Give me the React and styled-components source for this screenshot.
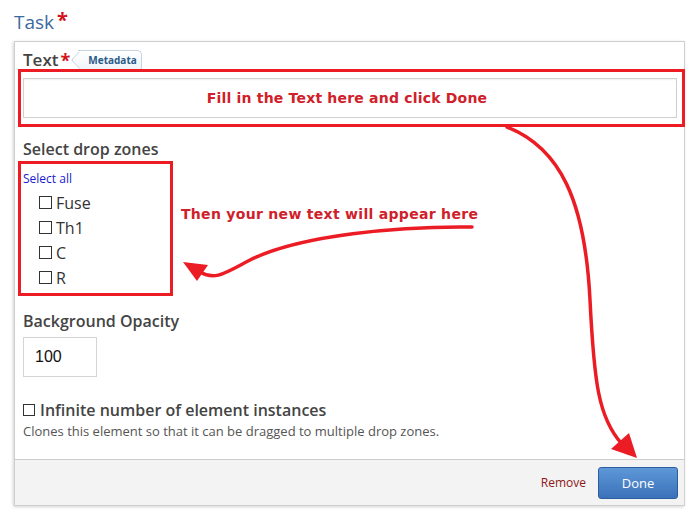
import React from "react";
import styled, { createGlobalStyle } from "styled-components";

const Global = createGlobalStyle`
  html, body { margin: 0; padding: 0; background: #fff; }
  body { font-family: "Open Sans", "Noto Sans", sans-serif; color: #444; }
  * { box-sizing: border-box; }
`;

const Page = styled.div`
  position: relative;
  width: 700px;
  height: 512px;
  padding: 10px 0 0 14px;
  overflow: hidden;
`;

const Title = styled.div`
  font-size: 19px;
  line-height: 24px;
  color: #3c6a9c;
  font-weight: 400;
`;

const Star = styled.span`
  color: #d2141c;
  font-size: ${(p) => p.$size || 20}px;
  font-weight: 700;
  margin-left: ${(p) => p.$ml ?? 3}px;
  vertical-align: top;
  line-height: 1;
`;

const Panel = styled.div`
  width: 671px;
  margin-top: 7px;
  border: 1px solid #cfcfcf;
  box-shadow: -1px 1px 3px rgba(0, 0, 0, 0.18);
  background: #fff;
`;

const Body = styled.div`
  padding: 8px 8px 20px 8px;
  display: flex;
  flex-direction: column;
`;

const LabelRow = styled.div`
  display: flex;
  align-items: flex-start;
  height: 19px;
`;

const Label = styled.div`
  font-size: ${(p) => p.$size || 16}px;
  line-height: 20px;
  font-weight: 600;
  color: #444;
  margin-top: ${(p) => p.$mt || 0}px;
  display: flex;
  align-items: center;
`;

const Tag = styled.span`
  position: relative;
  margin-left: 8px;
  margin-top: 0px;
  height: 20px;
  padding: 0 4px 1px 10px;
  display: inline-flex;
  align-items: center;
  font-size: 10px;
  font-weight: 700;
  color: #2c5a8a;
  background: linear-gradient(#ffffff, #edf2f7);
  border: 1px solid #c9d3de;
  border-left: none;
  border-bottom: none;
  border-radius: 0 5px 0 0;
  &::before {
    content: "";
    position: absolute;
    left: -5px;
    top: 3px;
    width: 11px;
    height: 11px;
    background: linear-gradient(135deg, #ffffff, #f2f5f9);
    border-left: 1px solid #c9d3de;
    border-bottom: 1px solid #c9d3de;
    transform: rotate(45deg);
    border-radius: 0 0 0 3px;
  }
`;

const TagText = styled.span`
  position: relative;
`;

const Highlight = styled.div`
  position: relative;
  border: 3px solid #ec1c24;
  margin-left: -5px;
  width: ${(p) => p.$w}px;
  padding: ${(p) => p.$pad};
  margin-top: ${(p) => p.$mt || 0}px;
  flex-shrink: 0;
  background: #fff;
`;

const TextField = styled.div`
  height: 40px;
  border: 1px solid #d0d0d0;
  box-shadow: inset 0 1px 2px rgba(0, 0, 0, 0.06);
  display: flex;
  align-items: center;
  justify-content: center;
  padding-right: 6px;
`;

const Callout = styled.span`
  font-family: "DejaVu Sans", Verdana, sans-serif;
  font-weight: 700;
  font-size: ${(p) => p.$size || 14}px;
  color: #d0202a;
  letter-spacing: ${(p) => p.$ls || 0}px;
  white-space: nowrap;
`;

const ZoneRow = styled.div`
  display: flex;
  align-items: flex-start;
`;

const SideCallout = styled.div`
  margin-left: 8px;
  padding-top: 43px;
`;

const SelectAll = styled.a`
  display: block;
  font-size: 12px;
  line-height: 16px;
  color: #1a1ad0;
  text-decoration: none;
  margin-bottom: 3px;
`;

const Option = styled.label`
  display: flex;
  align-items: center;
  height: 25px;
  padding-left: 16px;
  font-size: 16px;
  color: #333;
`;

const Box = styled.span`
  width: ${(p) => p.$s || 13}px;
  height: ${(p) => p.$s || 13}px;
  border: 1px solid #333;
  background: #fff;
  margin-right: ${(p) => p.$mr || 4}px;
  flex-shrink: 0;
`;

const NumberField = styled.div`
  margin-top: 6px;
  width: 74px;
  height: 40px;
  border: 1px solid #d4d4d4;
  padding-left: 11px;
  display: flex;
  align-items: center;
  font-family: "Liberation Sans", Arial, sans-serif;
  font-size: 16px;
  color: #111;
`;

const CheckLine = styled.label`
  margin-top: 23px;
  display: flex;
  align-items: center;
  font-size: 16px;
  line-height: 20px;
  font-weight: 600;
  color: #444;
`;

const Description = styled.div`
  margin-top: 3px;
  font-size: 13px;
  line-height: 16px;
  color: #555;
`;

const Footer = styled.div`
  border-top: 1px solid #cccccc;
  background: #f3f3f3;
  height: 46px;
  display: flex;
  align-items: flex-start;
  justify-content: flex-end;
  padding: 7px 6px 0 0;
  gap: 12px;
`;

const Remove = styled.a`
  font-size: 12px;
  line-height: 32px;
  color: #8e1717;
  text-decoration: none;
`;

const Done = styled.button`
  width: 80px;
  height: 32px;
  border: 1px solid #2d5d9e;
  border-radius: 3px;
  background: linear-gradient(#5e98d8, #3b71b9);
  color: #fff;
  font-family: "Open Sans", sans-serif;
  font-size: 13px;
  padding: 0;
`;

const Overlay = styled.svg`
  position: absolute;
  left: 0;
  top: 0;
  pointer-events: none;
`;

export default function App() {
  return (
    <Page>
      <Global />
      <Title>
        Task<Star $size={20}>*</Star>
      </Title>
      <Panel>
        <Body>
          <LabelRow>
            <Label $size={17}>
              Text<Star $size={18} $ml={2}>*</Star>
            </Label>
            <Tag>
              <TagText>Metadata</TagText>
            </Tag>
          </LabelRow>
          <Highlight $w={667} $pad="6px 5px 6px 2px">
            <TextField>
              <Callout $size={14} $ls={0.2}>
                Fill in the Text here and click Done
              </Callout>
            </TextField>
          </Highlight>
          <Label $mt={12}>Select drop zones</Label>
          <ZoneRow>
            <Highlight $w={155} $pad="7px 2px 3px 2px" $mt={2}>
              <SelectAll href="#">Select all</SelectAll>
              {["Fuse", "Th1", "C", "R"].map((o) => (
                <Option key={o}>
                  <Box />
                  {o}
                </Option>
              ))}
            </Highlight>
            <SideCallout>
              <Callout $size={14} $ls={0.3}>
                Then your new text will appear here
              </Callout>
            </SideCallout>
          </ZoneRow>
          <Label $mt={15}>Background Opacity</Label>
          <NumberField>100</NumberField>
          <CheckLine>
            <Box $s={12} $mr={5} />
            Infinite number of element instances
          </CheckLine>
          <Description>
            Clones this element so that it can be dragged to multiple drop zones.
          </Description>
        </Body>
        <Footer>
          <Remove href="#">Remove</Remove>
          <Done>Done</Done>
        </Footer>
      </Panel>
      <Overlay width="700" height="512" viewBox="0 0 700 512">
        <g fill="none" stroke="#ec1c24" strokeWidth="3.5" strokeLinecap="round">
          <path d="M507 127 C 560 148, 585 200, 590 300 C 594 380, 598 418, 622 444" />
          <path d="M472 227 C 400 226, 300 235, 250 260 C 225 273, 215 281, 200 272" />
        </g>
        <g fill="#ec1c24">
          <polygon points="611,449 629,433 637,458" />
          <polygon points="183,262 208,265 197,281" />
        </g>
      </Overlay>
    </Page>
  );
}
